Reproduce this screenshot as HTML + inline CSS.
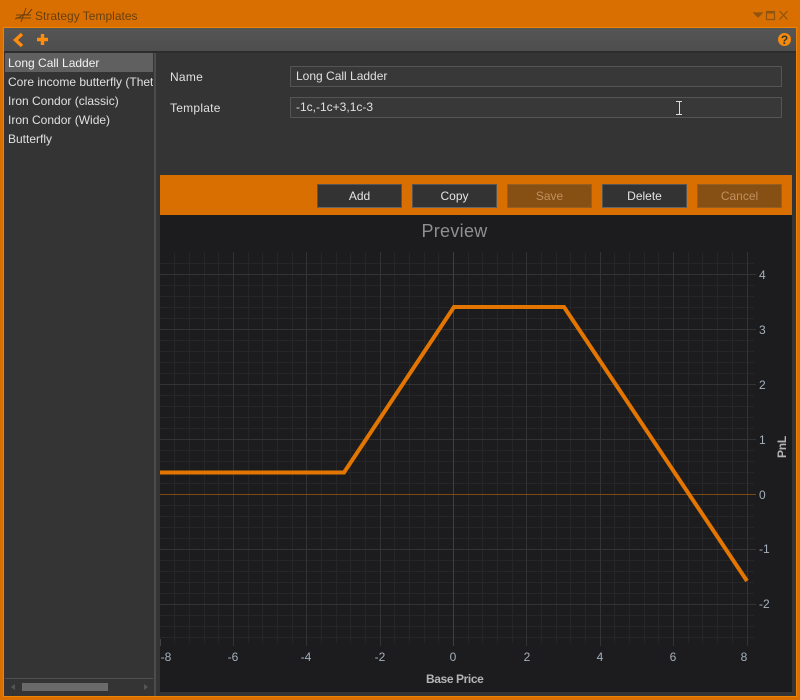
<!DOCTYPE html>
<html><head><meta charset="utf-8"><style>
html,body{margin:0;padding:0;background:#d96f00}
body{width:800px;height:700px;position:relative;overflow:hidden;font-family:"Liberation Sans",sans-serif;font-size:12px;color:#ddd}
div{position:absolute;box-sizing:border-box;white-space:nowrap}
.li{left:8px;width:145px;overflow:hidden;height:19px;line-height:19px;color:#e0e0e0}
.in{left:290px;width:492px;height:21px;background:#383838;border:1px solid #555;line-height:19px;padding-left:5px;color:#e0e0e0}
.lb{left:170px;letter-spacing:.25px;color:#e0e0e0;height:16px;line-height:16px}
.b{top:184px;width:85px;height:24px;background:#333;border:1px solid #555;border-bottom-color:#666;text-align:center;line-height:22px;color:#e4e4e4}
.d{background:#865014;border-color:#95601f;color:#c09060}
.x{color:#a4b0bc;font-size:12px;top:650px;width:30px;text-align:center;height:14px;line-height:14px}
.y{color:#a4b0bc;left:759px;height:14px;line-height:14px}
</style></head><body>
<div style="left:35px;top:8px;font-size:12px;color:#6a4010;line-height:16px">Strategy Templates</div>
<svg style="position:absolute;left:14px;top:6px" width="20" height="18" fill="none" stroke="#6a4010"><path d="M1 13L6 11 10 8 13 9 18 3M2 9H17M2 12H17M7 16L12 2"/></svg>
<svg style="position:absolute;left:750px;top:6px" width="48" height="16" fill="none" stroke="#8f5410" stroke-width="1.2"><path d="M4 7H12L8 11Z" fill="#8f5410"/><rect x="16.500" y="5.500" width="8" height="8"/><path d="M16.500 6.500H24.500" stroke-width="2"/><path d="M29.500 5L37.500 13.500M37.500 5L29.500 13.500"/></svg>

<div style="left:3px;top:27px;width:794px;height:670px;background:#343434;border:1px solid #f08300"></div>
<div style="left:4px;top:28px;width:792px;height:23px;background:linear-gradient(#555,#4e4e4e)"></div>
<div style="left:4px;top:51px;width:792px;height:2px;background:#2d2d2d"></div>
<svg style="position:absolute;left:10px;top:30px" width="40" height="20" fill="none" stroke="#ff8c0a" stroke-width="3.400"><path d="M12 4L5.500 10L12 16"/><path d="M32.500 4V15M27 9.500H38"/></svg>
<svg style="position:absolute;left:777px;top:32px" width="16" height="16"><circle cx="7.500" cy="7.500" r="6.500" fill="#f58a0c"/><text x="7.500" y="12" font-family="Liberation Sans" font-weight="bold" font-size="12" text-anchor="middle" fill="#333">?</text></svg>

<div style="left:5px;top:53px;width:148px;height:19px;background:#606060"></div>
<div class="li" style="top:54px;color:#f2f2f2">Long Call Ladder</div>
<div class="li" style="top:73px">Core income butterfly (Theta)</div>
<div class="li" style="top:92px">Iron Condor (classic)</div>
<div class="li" style="top:111px">Iron Condor (Wide)</div>
<div class="li" style="top:130px">Butterfly</div>
<div style="left:154px;top:53px;width:2px;height:643px;background:#4c4c4c"></div>
<div style="left:5px;top:678px;width:148px;height:1px;background:#505050"></div>
<div style="left:22px;top:683px;width:86px;height:8px;background:#6a6a6a"></div>
<svg style="position:absolute;left:10px;top:682px" width="140" height="10" fill="#555"><path d="M5 2V8L1 5ZM134 2V8L138 5Z"/></svg>

<div class="lb" style="top:69px">Name</div>
<div class="lb" style="top:100px">Template</div>
<div class="in" style="top:66px">Long Call Ladder</div>
<div class="in" style="top:97px">-1c,-1c+3,1c-3</div>

<div style="left:160px;top:175px;width:632px;height:40px;background:#d96f00"></div>
<div class="b" style="left:317px">Add</div>
<div class="b" style="left:412px">Copy</div>
<div class="b d" style="left:507px">Save</div>
<div class="b" style="left:602px">Delete</div>
<div class="b d" style="left:697px">Cancel</div>

<div style="left:160px;top:215px;width:632px;height:477px;background:#1c1c1e"></div>
<div style="left:160px;top:220px;width:589px;text-align:center;font-size:18px;line-height:22px;color:#8f8f8f;letter-spacing:.3px">Preview</div>

<svg style="position:absolute;left:0;top:0" width="800" height="700" fill="none" shape-rendering="crispEdges">
<path stroke="#262628" d="M174.500 252V643M189.500 252V643M204.500 252V643M218.500 252V643M248.500 252V643M262.500 252V643M277.500 252V643M292.500 252V643M321.500 252V643M336.500 252V643M350.500 252V643M365.500 252V643M394.500 252V643M409.500 252V643M424.500 252V643M438.500 252V643M468.500 252V643M482.500 252V643M497.500 252V643M512.500 252V643M541.500 252V643M556.500 252V643M570.500 252V643M585.500 252V643M614.500 252V643M629.500 252V643M644.500 252V643M658.500 252V643M688.500 252V643M702.500 252V643M717.500 252V643M732.500 252V643"/>
<path stroke="#262628" d="M160 263.500H754M160 285.500H754M160 296.500H754M160 307.500H754M160 318.500H754M160 340.500H754M160 351.500H754M160 362.500H754M160 373.500H754M160 395.500H754M160 406.500H754M160 417.500H754M160 428.500H754M160 450.500H754M160 461.500H754M160 472.500H754M160 483.500H754M160 505.500H754M160 516.500H754M160 527.500H754M160 538.500H754M160 560.500H754M160 571.500H754M160 582.500H754M160 593.500H754M160 615.500H754M160 626.500H754M160 637.500H754"/>
<path stroke="#333335" d="M233.500 252V646M306.500 252V646M380.500 252V646M526.500 252V646M600.500 252V646M673.500 252V646M747.500 252V646"/>
<path stroke="#333335" d="M160 274.500H756M160 329.500H756M160 384.500H756M160 439.500H756M160 549.500H756M160 604.500H756"/>
<path stroke="#5a3a14" d="M453.500 252V646"/>
<path stroke="#7a4a10" d="M160 494.500H756"/>
<path stroke="#444" d="M160.500 639V646"/>
</svg>
<svg style="position:absolute;left:0;top:0" width="800" height="700" fill="none"><path stroke="#e37600" stroke-width="4" stroke-linejoin="miter" d="M160 472.500H344L454 307H564L747 581"/>
<path stroke="#ddd" stroke-width="1" d="M676 101.500H682M676 114.500H682M679.500 102V114"/></svg>

<div class="x" style="left:151px">-8</div>
<div class="x" style="left:218px">-6</div>
<div class="x" style="left:291px">-4</div>
<div class="x" style="left:365px">-2</div>
<div class="x" style="left:438px">0</div>
<div class="x" style="left:512px">2</div>
<div class="x" style="left:585px">4</div>
<div class="x" style="left:658px">6</div>
<div class="x" style="left:729px">8</div>
<div class="y" style="top:268px">4</div>
<div class="y" style="top:323px">3</div>
<div class="y" style="top:378px">2</div>
<div class="y" style="top:433px">1</div>
<div class="y" style="top:488px">0</div>
<div class="y" style="top:542px">-1</div>
<div class="y" style="top:597px">-2</div>
<div style="left:426px;top:672px;font-weight:bold;font-size:12px;letter-spacing:-.4px;color:#b4b4b4;line-height:14px">Base Price</div>
<div style="left:775px;top:440px;width:14px;height:14px;font-weight:bold;font-size:12px;letter-spacing:-.2px;color:#b4b4b4;line-height:14px;transform:rotate(-90deg);display:flex;justify-content:center">PnL</div>
</body></html>
